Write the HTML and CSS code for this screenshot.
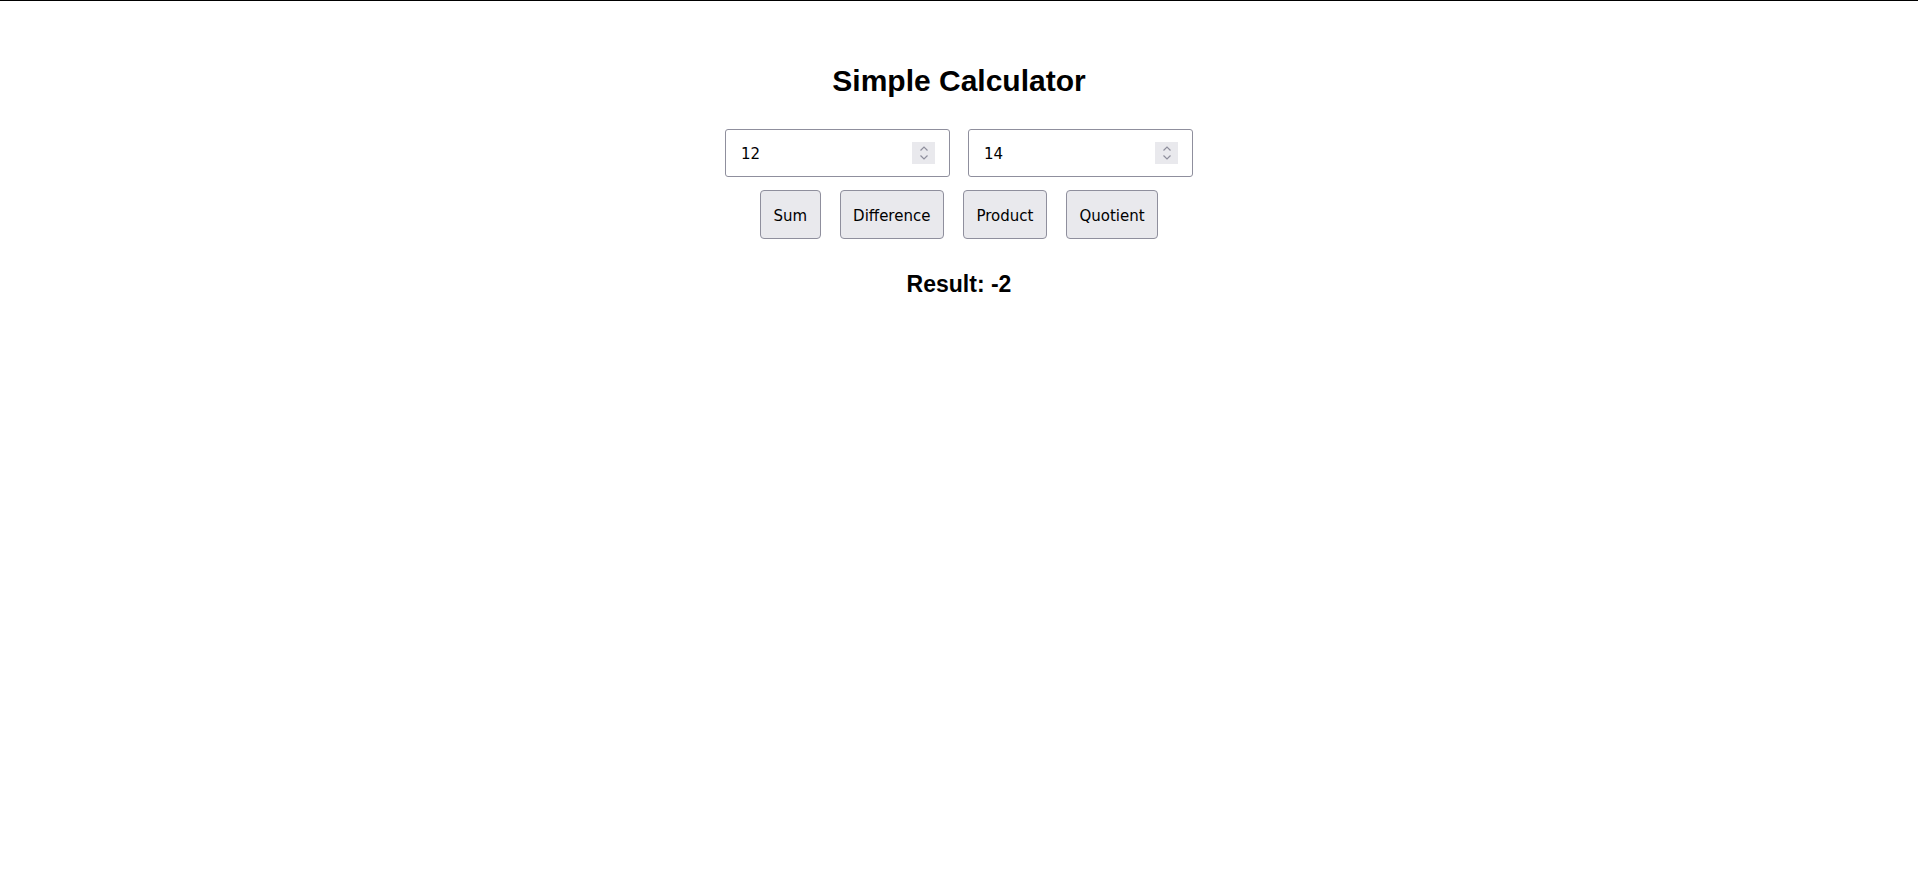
FILE: index.html
```html
<!DOCTYPE html>
<html>
<head>
<meta charset="utf-8">
<link rel="stylesheet" href="styles.css">
</head>
<body>
<div class="page">
  <h1 class="title">Simple Calculator</h1>
  <div class="inputs">
    <div class="num-field">
      <input class="num-input" type="text" value="12">
      <span class="spin"><svg width="10" height="16" viewBox="0 0 10 16"><path d="M1.5 5.5 L5 2 L8.5 5.5" fill="none" stroke="#8f8f9d" stroke-width="1.2"/><path d="M1.5 10.5 L5 14 L8.5 10.5" fill="none" stroke="#8f8f9d" stroke-width="1.2"/></svg></span>
    </div>
    <div class="num-field">
      <input class="num-input" type="text" value="14">
      <span class="spin"><svg width="10" height="16" viewBox="0 0 10 16"><path d="M1.5 5.5 L5 2 L8.5 5.5" fill="none" stroke="#8f8f9d" stroke-width="1.2"/><path d="M1.5 10.5 L5 14 L8.5 10.5" fill="none" stroke="#8f8f9d" stroke-width="1.2"/></svg></span>
    </div>
  </div>
  <div class="buttons">
    <button class="btn">Sum</button>
    <button class="btn">Difference</button>
    <button class="btn">Product</button>
    <button class="btn">Quotient</button>
  </div>
  <h2 class="result">Result: -2</h2>
</div>
</body>
</html>
```
FILE: styles.css
```css
html, body {
  margin: 0;
  padding: 0;
  background: #fff;
}
.page {
  border-top: 1px solid #000;
  min-height: 874px;
  display: flex;
  flex-direction: column;
  align-items: center;
  font-family: "Liberation Sans", Arial, sans-serif;
  color: #000;
}
.title {
  margin: 62px 0 0 0;
  font-size: 30px;
  font-weight: bold;
  line-height: 36px;
}
.inputs {
  display: flex;
  gap: 18px;
  margin-top: 30px;
}
.num-field {
  height: 46px;
  border: 1px solid #8f8f9d;
  border-radius: 3px;
  display: flex;
  align-items: center;
  padding: 0 14px 0 14px;
  box-sizing: content-box;
  width: 195px;
}
.num-input {
  flex: 1;
  min-width: 0;
  border: none;
  outline: none;
  padding: 2px 0 0 1px;
  font-family: "DejaVu Sans", sans-serif;
  font-size: 15px;
  color: #000;
  background: transparent;
}
.spin {
  width: 23px;
  height: 22px;
  background: #e9e9ed;
  display: flex;
  align-items: center;
  justify-content: center;
}
.buttons {
  display: flex;
  gap: 19px;
  margin-top: 13px;
}
.btn {
  height: 49px;
  padding: 2px 12.5px 0 12.5px;
  border: 1px solid #8f8f9d;
  border-radius: 4px;
  background: #e9e9ed;
  font-family: "DejaVu Sans", sans-serif;
  font-size: 15px;
  color: #000;
}
.result {
  margin: 31px 0 0 0;
  font-size: 23px;
  line-height: 28px;
  font-weight: bold;
}
```
